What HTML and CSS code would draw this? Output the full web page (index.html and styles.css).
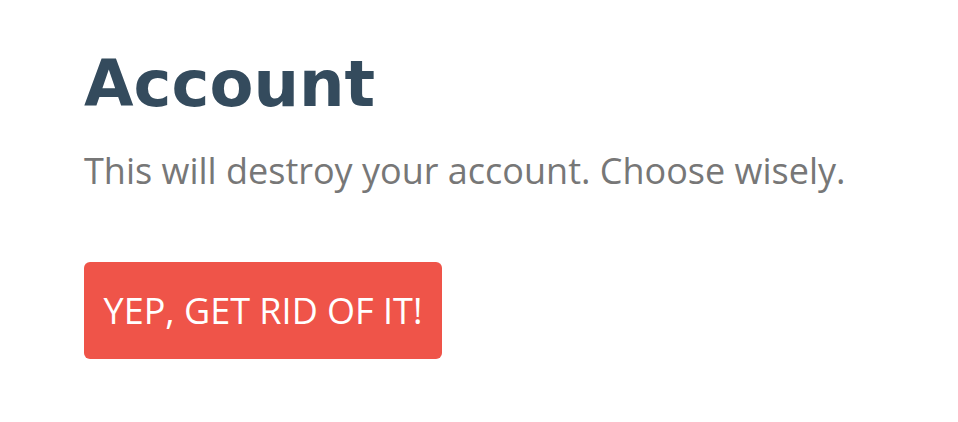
FILE: index.html
```html
<!DOCTYPE html>
<html>
<head>
<meta charset="utf-8">
<link rel="stylesheet" href="styles.css">
</head>
<body>
<main class="panel">
  <h1 class="title">Account</h1>
  <p class="desc">This will destroy your account. Choose wisely.</p>
  <button class="danger">YEP, GET RID OF IT!</button>
</main>
</body>
</html>
```

FILE: styles.css
```css
html, body {
  margin: 0;
  padding: 0;
  background: #fff;
}
.panel {
  padding: 44px 84px;
  display: flex;
  flex-direction: column;
  align-items: flex-start;
}
.title {
  margin: 0;
  font-family: "DejaVu Sans", sans-serif;
  font-weight: bold;
  font-size: 64px;
  line-height: 80px;
  color: #344b5d;
}
.desc {
  margin: 25px 0 0;
  font-family: "Open Sans", sans-serif;
  font-size: 36px;
  line-height: 44px;
  color: #777;
}
.danger {
  margin-top: 69px;
  width: 358px;
  height: 97px;
  border: none;
  border-radius: 6px;
  background: #ef5449;
  color: #fff;
  font-family: "Open Sans", sans-serif;
  font-size: 36px;
  padding: 0;
}
```
